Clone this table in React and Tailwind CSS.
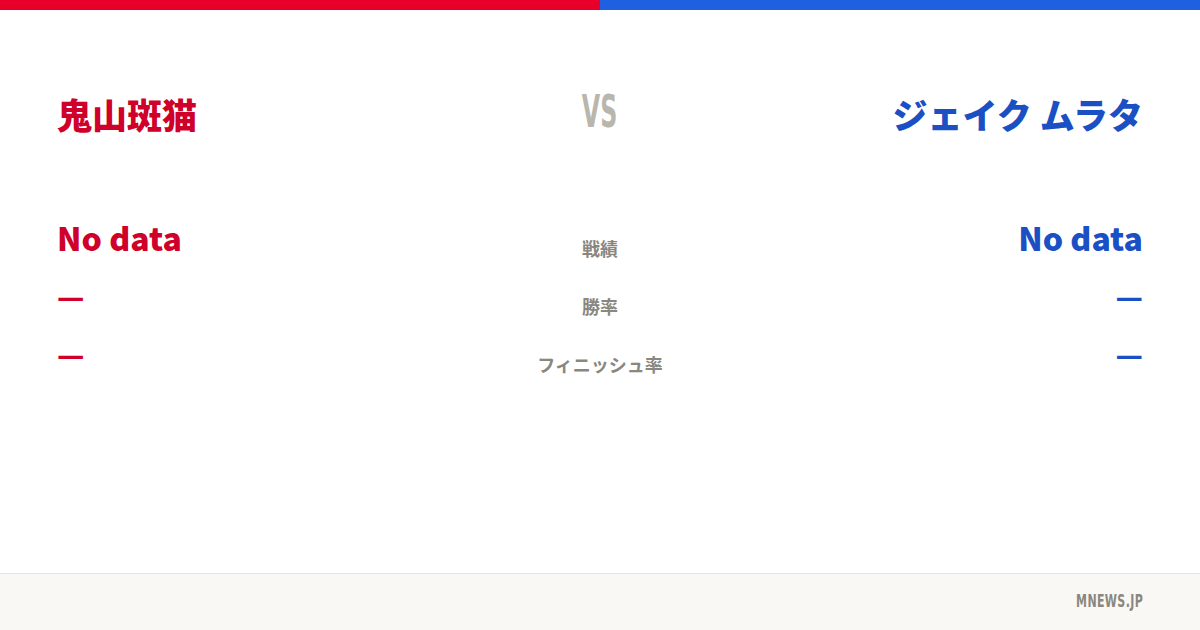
export default function App() {
  const jp = { fontFamily: '"Noto Sans CJK JP", "Noto Sans", sans-serif' };
  const cond = { fontFamily: '"DejaVu Sans Condensed", "Liberation Sans", sans-serif' };

  const rows = [
    { label: "戦績", left: "No data", right: "No data", big: true },
    { label: "勝率", left: "—", right: "—" },
    { label: "フィニッシュ率", left: "—", right: "—" },
  ];

  return (
    <div className="w-[1200px] h-[630px] bg-white flex flex-col overflow-hidden" style={jp}>
      {/* top bar */}
      <div className="flex h-[10px]">
        <div className="flex-1 bg-[#e8002a]" />
        <div className="flex-1 bg-[#1e60e0]" />
      </div>

      <div className="flex-1 px-[57px] pt-[78px]">
        {/* names */}
        <div className="grid grid-cols-[1fr_auto_1fr] items-center h-[50px]">
          <div className="text-[35px] font-black text-[#cf0029] leading-none">鬼山斑猫</div>
          <div
            className="text-[44px] font-bold text-[#b9b6ad] leading-none scale-x-[0.6] -mt-[2px]"
            style={cond}
          >
            VS
          </div>
          <div className="text-[35px] font-black text-[#1a50c4] leading-none text-right">ジェイク ムラタ</div>
        </div>

        {/* stats */}
        <div className="mt-[81px] flex flex-col">
          {rows.map((r, i) => (
            <div key={i} className="grid grid-cols-[1fr_auto_1fr] items-center h-[58px]">
              <div
                className={`${r.big ? "text-[32px] mb-[22px]" : "text-[30px] mb-[22px]"} font-black text-[#cf0029] leading-none`}
              >
                {r.left}
              </div>
              <div className="text-[18px] font-bold text-[#8a877f] leading-none text-center">{r.label}</div>
              <div
                className={`${r.big ? "text-[32px] mb-[22px]" : "text-[30px] mb-[22px]"} font-black text-[#1a50c4] leading-none text-right`}
              >
                {r.right}
              </div>
            </div>
          ))}
        </div>
      </div>

      {/* footer */}
      <div className="h-[57px] border-t border-[#e6e4de] bg-[#f9f8f4] flex items-center justify-end px-[57px]">
        <span className="text-[17px] font-bold text-[#8a877f] tracking-[0.5px] scale-x-[0.72] origin-right" style={cond}>
          MNEWS.JP
        </span>
      </div>
    </div>
  );
}
